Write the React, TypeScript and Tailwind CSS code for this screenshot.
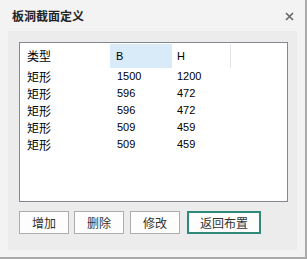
const rows = [
  { type: '矩形', b: '1500', h: '1200' },
  { type: '矩形', b: '596', h: '472' },
  { type: '矩形', b: '596', h: '472' },
  { type: '矩形', b: '509', h: '459' },
  { type: '矩形', b: '509', h: '459' },
];

const cjk = "font-['Noto_Sans_CJK_SC',sans-serif]";
const num = "font-['Liberation_Sans','Noto_Sans_CJK_SC',sans-serif]";

export default function App() {
  return (
    <div className="w-[307px] h-[259px] bg-[#f3f3f3] border-r-2 border-b-2 border-[#a9a9a9] flex flex-col overflow-hidden">
      {/* Title bar */}
      <div className="h-[31px] flex items-center justify-between pl-[12px] pr-[11px] shrink-0">
        <span className={`${cjk} text-[12px] font-bold text-[#222]`}>板洞截面定义</span>
        <svg width="9" height="9" viewBox="0 0 9 9" className="mt-[1px]">
          <path d="M1 1 L8 8 M8 1 L1 8" stroke="#666" strokeWidth="1.6" />
        </svg>
      </div>

      {/* Body */}
      <div className="mx-[8px] h-[219px] bg-[#ececec] flex flex-col pl-[11px] pt-[11px]">
        <div className="w-[269px] h-[160px] bg-white border border-[#828790] pt-[1px]">
          <div className="flex h-[24px] items-center">
            <div className={`${cjk} w-[90px] pl-[7px] text-[12px] text-black`}>类型</div>
            <div className={`${num} w-[62px] h-full flex items-center pl-[6px] bg-[#d9ebf9] text-[11px] text-black`}>B</div>
            <div className={`${num} w-[59px] h-full flex items-center pl-[5px] text-[11px] text-black border-r border-[#e3e3e3]`}>H</div>
          </div>
          {rows.map((r, i) => (
            <div key={i} className="flex h-[17px] items-center">
              <div className={`${cjk} w-[90px] pl-[7px] text-[12px] text-black`}>{r.type}</div>
              <div className={`${num} w-[62px] pl-[7px] text-[11px] text-black`}>{r.b}</div>
              <div className={`${num} w-[59px] pl-[5px] text-[11px] text-black`}>{r.h}</div>
            </div>
          ))}
        </div>

        <div className="flex mt-[9px]">
          <button className={`${cjk} w-[50px] h-[23px] bg-[#fdfdfd] border border-[#adadad] text-[12px] text-[#333]`}>增加</button>
          <button className={`${cjk} w-[50px] h-[23px] bg-[#fdfdfd] border border-[#adadad] text-[12px] text-[#333] ml-[5px]`}>删除</button>
          <button className={`${cjk} w-[50px] h-[23px] bg-[#fdfdfd] border border-[#adadad] text-[12px] text-[#333] ml-[6px]`}>修改</button>
          <button className={`${cjk} w-[74px] h-[23px] bg-[#fdfdfd] border-2 border-[#2e8b7a] text-[12px] text-[#333] ml-[7px]`}>返回布置</button>
        </div>
      </div>
    </div>
  );
}
